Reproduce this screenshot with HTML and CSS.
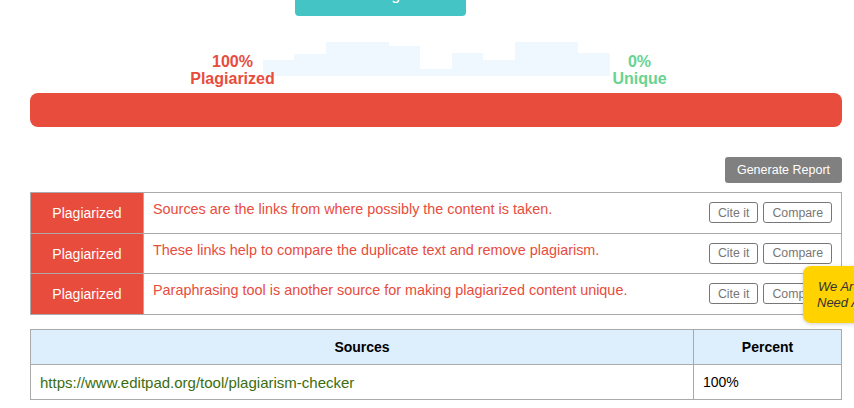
FILE: index.html
```html
<!DOCTYPE html>
<html lang="en">

<head>
    <meta charset="UTF-8">
    <meta name="viewport" content="width=device-width, initial-scale=1.0">
    <title>Plagiarism Checker Results</title>
    <link rel="stylesheet" href="styles.css">
</head>

<body>

    <div class="page">
        <div class="top-action">
            <button class="check-btn">Check Plagiarism</button>
        </div>

        <!-- score labels with the little bar chart behind -->
        <div class="stats">
            <div class="stat stat-plag">100%<br>Plagiarized</div>
            <div class="chart">
                <span class="bar" style="height: 16px;"></span>
                <span class="bar" style="height: 22px;"></span>
                <span class="bar" style="height: 34px;"></span>
                <span class="bar" style="height: 34px;"></span>
                <span class="bar" style="height: 30px;"></span>
                <span class="bar" style="height: 7px;"></span>
                <span class="bar" style="height: 23px;"></span>
                <span class="bar" style="height: 16px;"></span>
                <span class="bar" style="height: 34px;"></span>
                <span class="bar" style="height: 34px;"></span>
                <span class="bar" style="height: 23px;"></span>
            </div>
            <div class="stat stat-unique">0%<br>Unique</div>
        </div>

        <div class="progress">
            <div class="progress-fill" style="width: 100%;"></div>
        </div>

        <div class="report-bar">
            <button class="report-btn">Generate Report</button>
        </div>

        <table class="results">
            <tr>
                <td class="tag">Plagiarized</td>
                <td class="sentence">
                    <div class="sentence-row">
                        <span class="sentence-text">Sources are the links from where possibly the content is taken.</span>
                        <span class="actions">
                            <button class="small-btn">Cite it</button>
                            <button class="small-btn">Compare</button>
                        </span>
                    </div>
                </td>
            </tr>
            <tr>
                <td class="tag">Plagiarized</td>
                <td class="sentence">
                    <div class="sentence-row">
                        <span class="sentence-text">These links help to compare the duplicate text and remove plagiarism.</span>
                        <span class="actions">
                            <button class="small-btn">Cite it</button>
                            <button class="small-btn">Compare</button>
                        </span>
                    </div>
                </td>
            </tr>
            <tr>
                <td class="tag">Plagiarized</td>
                <td class="sentence">
                    <div class="sentence-row">
                        <span class="sentence-text">Paraphrasing tool is another source for making plagiarized content unique.</span>
                        <span class="actions">
                            <button class="small-btn">Cite it</button>
                            <button class="small-btn">Compare</button>
                        </span>
                    </div>
                </td>
            </tr>
        </table>

        <table class="sources">
            <tr>
                <th class="col-source">Sources</th>
                <th class="col-percent">Percent</th>
            </tr>
            <tr>
                <td><a class="source-link" href="#">https://www.editpad.org/tool/plagiarism-checker</a></td>
                <td>100%</td>
            </tr>
        </table>
    </div>

    <div class="chat-widget">
        We Are Here!<br>Need A Help?
    </div>

</body>

</html>
```

FILE: styles.css
```css
body {
    font-family: 'Liberation Sans', Arial, sans-serif;
    background-color: #fff;
    margin: 0;
    padding: 0;
    overflow: hidden;
}

.page {
    width: 812px;
    padding-left: 30px;
}

/* main action button, scrolled partly out of view */
.top-action {
    margin-top: -26px;
    padding-left: 265px;
}

.check-btn {
    width: 171px;
    height: 42px;
    background-color: #45c4c6;
    border: none;
    border-radius: 4px;
    color: white;
    font-family: inherit;
    font-size: 16px;
    padding: 0;
    display: block;
}

.stats {
    display: flex;
    justify-content: center;
    align-items: flex-start;
    margin-top: 26px;
    height: 45px;
}

.stat {
    width: 90px;
    margin-top: 11px;
    text-align: center;
    font-weight: bold;
    font-size: 16px;
    line-height: 17px;
    position: relative;
    z-index: 1;
}

.stat-plag {
    color: #e74c3c;
}

.stat-unique {
    color: #68d391;
}

.chart {
    width: 347px;
    height: 34px;
    margin: 0 -15px;
    display: flex;
    align-items: flex-end;
}

.bar {
    flex: 1;
    background-color: #f0f8ff;
}

.progress {
    margin-top: 6px;
    height: 34px;
    border-radius: 8px;
    background-color: #f3f3f3;
    overflow: hidden;
}

.progress-fill {
    height: 100%;
    background-color: #e74c3c;
}

.report-bar {
    display: flex;
    justify-content: flex-end;
    margin-top: 30px;
}

.report-btn {
    height: 26px;
    width: 117px;
    padding: 0;
    background-color: #808080;
    border: none;
    border-radius: 3px;
    color: white;
    font-family: inherit;
    font-size: 12.5px;
}

/* sentence results */
.results {
    width: 812px;
    margin-top: 9px;
    border-collapse: collapse;
}

.results td {
    border: 1px solid #aaa;
    padding: 0;
}

.results tr {
    height: 40.7px;
}

.tag {
    width: 112px;
    background-color: #e74c3c;
    color: white;
    font-size: 14px;
    text-align: center;
    vertical-align: middle;
}

.sentence {
    vertical-align: top;
}

.sentence-row {
    display: flex;
    justify-content: space-between;
    align-items: flex-start;
    padding: 9px 9px 0 9px;
}

.sentence-text {
    color: #e74c3c;
    font-size: 14.4px;
    line-height: 14px;
}

.actions {
    display: flex;
    gap: 5px;
    flex-shrink: 0;
}

.small-btn {
    height: 21px;
    padding: 0 8px;
    background: white;
    border: 1px solid #777;
    border-radius: 3px;
    color: #777;
    font-family: inherit;
    font-size: 12.3px;
}

/* sources table */
.sources {
    width: 812px;
    margin-top: 14px;
    border-collapse: collapse;
    font-size: 14px;
}

.sources th,
.sources td {
    border: 1px solid #aaa;
    height: 34px;
    padding: 0 9px;
}

.sources th {
    background-color: #ddeefd;
    color: #000;
}

.col-source {
    width: 644px;
}

.source-link {
    color: #3b6d0f;
    font-size: 15px;
    text-decoration: none;
}

.chat-widget {
    position: absolute;
    left: 803px;
    top: 266px;
    width: 108px;
    height: 57px;
    box-sizing: border-box;
    padding-top: 13px;
    background-color: #ffd200;
    border-radius: 8px;
    box-shadow: 0 1px 4px rgba(0, 0, 0, 0.2);
    color: #333;
    font-size: 13px;
    font-style: italic;
    line-height: 16px;
    text-align: center;
}
```
